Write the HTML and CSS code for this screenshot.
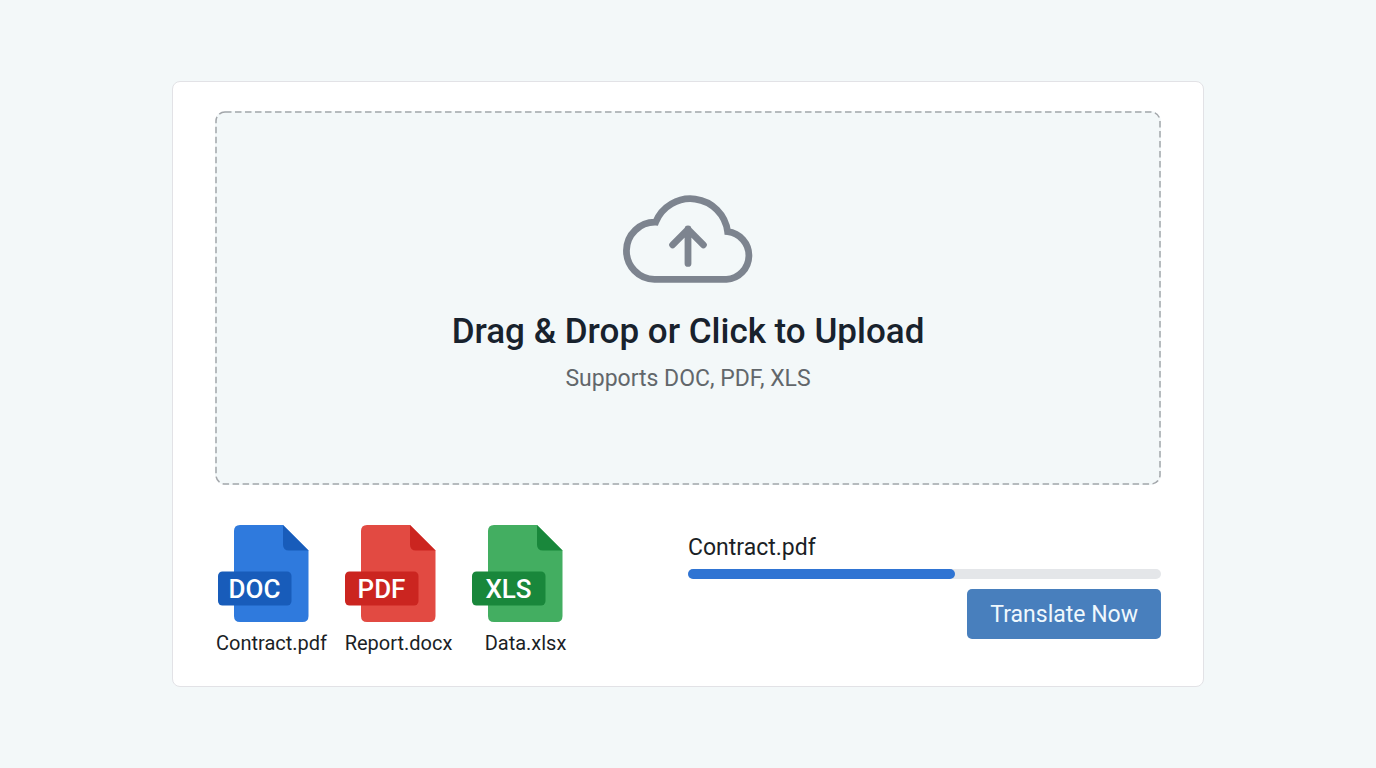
FILE: index.html
```html
<!DOCTYPE html>
<html lang="en">
<head>
    <meta charset="UTF-8">
    <meta name="viewport" content="width=device-width, initial-scale=1.0">
    <title>Upload Documents</title>
    <link rel="stylesheet" href="styles.css">
</head>
<body>
    <main class="card">
        <label class="dropzone" for="file-input">
            <svg class="dropzone-border" aria-hidden="true">
                <rect x="1" y="1" rx="9" stroke-width="1.5" stroke-dasharray="6.5 3.5" />
            </svg>
            <svg class="cloud-icon" viewBox="0 0 130 88" aria-hidden="true">
                <path stroke-width="6.8" d="M31.5 84.4A28.6 28.6 0 0 1 32.6 27.2A37.5 37.5 0 0 1 104.6 36.6A24 24 0 0 1 103.4 84.4Z" />
                <path stroke-width="6.8" stroke-linecap="round" stroke-linejoin="round" d="M65 68.4V34M49.6 49.8L65 34.4L80.4 49.8" />
            </svg>
            <span class="dropzone-title">Drag &amp; Drop or Click to Upload</span>
            <span class="dropzone-hint">Supports DOC, PDF, XLS</span>
            <input class="file-input" type="file" id="file-input" accept=".doc,.docx,.pdf,.xls,.xlsx" multiple>
        </label>

        <div class="bottom">
            <ul class="files">
                <li class="file doc">
                    <svg class="file-icon" viewBox="0 0 92 98" aria-hidden="true">
                        <path class="sheet" d="M22 0H65L90.5 25.5V91Q90.5 97 84.5 97H22Q16 97 16 91V6Q16 0 22 0Z" />
                        <path class="dark" d="M65 0L90.5 25.5H71Q65 25.5 65 19.5Z" />
                        <rect class="dark" y="46.5" width="73.5" height="34" rx="4.5" />
                        <text x="36.5" y="73">DOC</text>
                    </svg>
                    <span class="file-name">Contract.pdf</span>
                </li>
                <li class="file pdf">
                    <svg class="file-icon" viewBox="0 0 92 98" aria-hidden="true">
                        <path class="sheet" d="M22 0H65L90.5 25.5V91Q90.5 97 84.5 97H22Q16 97 16 91V6Q16 0 22 0Z" />
                        <path class="dark" d="M65 0L90.5 25.5H71Q65 25.5 65 19.5Z" />
                        <rect class="dark" y="46.5" width="73.5" height="34" rx="4.5" />
                        <text x="36.5" y="73">PDF</text>
                    </svg>
                    <span class="file-name">Report.docx</span>
                </li>
                <li class="file xls">
                    <svg class="file-icon" viewBox="0 0 92 98" aria-hidden="true">
                        <path class="sheet" d="M22 0H65L90.5 25.5V91Q90.5 97 84.5 97H22Q16 97 16 91V6Q16 0 22 0Z" />
                        <path class="dark" d="M65 0L90.5 25.5H71Q65 25.5 65 19.5Z" />
                        <rect class="dark" y="46.5" width="73.5" height="34" rx="4.5" />
                        <text x="36.5" y="73">XLS</text>
                    </svg>
                    <span class="file-name">Data.xlsx</span>
                </li>
            </ul>

            <div class="upload">
                <label class="upload-name" for="upload-progress">Contract.pdf</label>
                <progress class="upload-progress" id="upload-progress" value="56.5" max="100"></progress>
                <button class="translate-btn" type="button">Translate Now</button>
            </div>
        </div>
    </main>
</body>
</html>
```
FILE: styles.css
```css
* {
    box-sizing: border-box;
}
body {
    font-family: Roboto, "Liberation Sans", sans-serif;
    background-color: #f3f8f9;
    color: #1b1f26;
    display: flex;
    justify-content: center;
    align-items: center;
    min-height: 100vh;
    margin: 0;
}
.card {
    width: 75%;
    padding: 29px 42px 31px;
    background-color: #fff;
    border: 1px solid #e2e2e6;
    border-radius: 8px;
}
.dropzone {
    position: relative;
    display: flex;
    flex-direction: column;
    align-items: center;
    padding: 84px 20px 90px;
    background-color: #f3f8f9;
    border-radius: 10px;
    cursor: pointer;
}
/* dashed outline, longer dashes than border-style gives */
.dropzone-border {
    position: absolute;
    inset: 0;
    width: 100%;
    height: 100%;
}
.dropzone-border rect {
    width: calc(100% - 2px);
    height: calc(100% - 2px);
    fill: none;
    stroke: #a3a6aa;
}
.cloud-icon {
    width: 130px;
    height: 88px;
    fill: none;
    stroke: #7d848f;
    margin-bottom: 25px;
}
.dropzone-title {
    font-size: 35px;
    font-weight: 500;
    line-height: 48px;
    color: #18222d;
}
.dropzone-hint {
    margin-top: 7px;
    font-size: 23px;
    line-height: 32px;
    color: #62676b;
}
.file-input {
    position: absolute;
    inset: 0;
    opacity: 0;
    cursor: pointer;
}
.bottom {
    display: grid;
    grid-template-columns: 1fr 1fr;
    margin-top: 40px;
}
.files {
    display: flex;
    gap: 16px;
    margin: 0;
    padding: 0 0 0 1px;
    list-style: none;
}
.file {
    width: 111px;
    display: flex;
    flex-direction: column;
}
.file-icon {
    width: 92px;
    height: 98px;
    margin-left: 2px;
}
.file-icon text {
    font-size: 26px;
    font-weight: 500;
    text-anchor: middle;
    fill: #fff;
}
.doc .sheet {
    fill: #2f7add;
}
.doc .dark {
    fill: #185cba;
}
.pdf .sheet {
    fill: #e24a42;
}
.pdf .dark {
    fill: #cb2520;
}
.xls .sheet {
    fill: #43ae61;
}
.xls .dark {
    fill: #19873b;
}
.file-name {
    margin-top: 8px;
    font-size: 20px;
    line-height: 24px;
    text-align: center;
}
.upload {
    display: flex;
    flex-direction: column;
    padding-top: 9px;
}
.upload-name {
    font-size: 23px;
    line-height: 28px;
}
.upload-progress {
    appearance: none;
    width: 100%;
    height: 10px;
    margin: 7px 0 10px;
    border: none;
}
.upload-progress::-webkit-progress-bar {
    background-color: #e4e6e9;
    border-radius: 5px;
}
.upload-progress::-webkit-progress-value {
    background-color: #2f74d3;
    border-radius: 5px;
}
.translate-btn {
    align-self: flex-end;
    padding: 11px 23px 9px;
    background-color: #487fbd;
    color: #eff8fd;
    border: none;
    border-radius: 5px;
    font-family: inherit;
    font-size: 23px;
    line-height: 30px;
    cursor: pointer;
}
.translate-btn:hover {
    background-color: #3c70ab;
}
```
